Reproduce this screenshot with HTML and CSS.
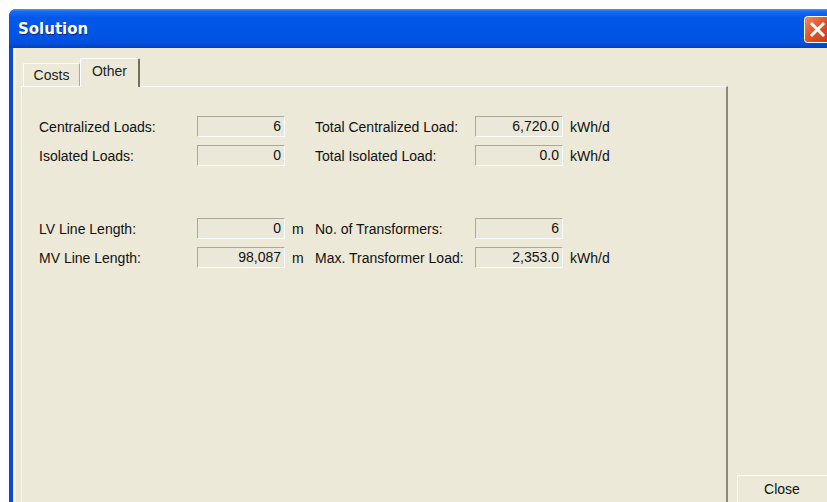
FILE: index.html
```html
<!DOCTYPE html>
<html>
<head>
<meta charset="utf-8">
<title>Solution</title>
<link rel="stylesheet" href="styles.css">
</head>
<body>
<div class="window">
  <div class="titlebar">
    <span class="title">Solution</span>
    <span class="close-x">
      <svg width="27" height="27" viewBox="0 0 27 27">
        <defs>
          <linearGradient id="xg" x1="0" y1="0" x2="1" y2="1">
            <stop offset="0" stop-color="#f08a6a"/>
            <stop offset="0.45" stop-color="#e0562c"/>
            <stop offset="1" stop-color="#c23a12"/>
          </linearGradient>
        </defs>
        <rect x="0.5" y="0.5" width="26" height="26" rx="3" fill="url(#xg)" stroke="#fff"/>
        <path d="M8 8 L19 19 M19 8 L8 19" stroke="#fff" stroke-width="3" stroke-linecap="square"/>
      </svg>
    </span>
  </div>
  <div class="client">
    <div class="tabs-area">
      <div class="tabstrip">
        <div class="tab">Costs</div>
        <div class="tab active">Other</div>
      </div>
      <div class="panel">
        <div class="fields">
          <span class="label">Centralized Loads:</span>
          <span class="box">6</span>
          <span class="unit"></span>
          <span class="label">Total Centralized Load:</span>
          <span class="box">6,720.0</span>
          <span class="unit">kWh/d</span>

          <span class="label">Isolated Loads:</span>
          <span class="box">0</span>
          <span class="unit"></span>
          <span class="label">Total Isolated Load:</span>
          <span class="box">0.0</span>
          <span class="unit">kWh/d</span>
        </div>
        <div class="fields lines">
          <span class="label">LV Line Length:</span>
          <span class="box">0</span>
          <span class="unit">m</span>
          <span class="label">No. of Transformers:</span>
          <span class="box">6</span>
          <span class="unit"></span>

          <span class="label">MV Line Length:</span>
          <span class="box">98,087</span>
          <span class="unit">m</span>
          <span class="label">Max. Transformer Load:</span>
          <span class="box">2,353.0</span>
          <span class="unit">kWh/d</span>
        </div>
      </div>
    </div>
    <div class="side">
      <button class="btn">Close</button>
    </div>
  </div>
</div>
</body>
</html>
```

FILE: styles.css
```css
html, body {
  margin: 0;
  padding: 0;
  background: #ffffff;
  overflow: hidden;
  width: 827px;
  height: 502px;
}

body {
  font-family: "Liberation Sans", Arial, sans-serif;
  font-size: 14px;
  color: #000;
}

.window {
  margin: 9px 0 0 9px;
  width: 830px;
  height: 493px;
  display: flex;
  flex-direction: column;
  border-radius: 7px 7px 0 0;
  overflow: hidden;
  background: #0c4bd8;
}

/* caption bar */
.titlebar {
  height: 39px;
  flex: none;
  display: flex;
  align-items: center;
  justify-content: space-between;
  padding: 0 8px 0 9px;
  background: linear-gradient(#4a95fa 0, #1a6af4 6%, #0258ea 22%, #0055e6 60%, #0150dc 88%, #003fbd 100%);
}

.title {
  font-family: "DejaVu Sans", sans-serif;
  font-weight: bold;
  font-size: 15px;
  color: #fff;
  text-shadow: 1px 1px 0 #0a2a8a;
  margin-top: 1px;
}

.close-x {
  display: flex;
  margin-top: 2px;
}

/* window body */
.client {
  flex: 1;
  min-height: 0;
  display: flex;
  margin-left: 4px;
  background: #ece9d8;
  border-left: 3px solid #f4f2e8;
  padding-left: 5px;
}

.tabs-area {
  width: 707px;
  display: flex;
  flex-direction: column;
  padding-top: 10px;
}

.tabstrip {
  display: flex;
  align-items: flex-end;
  height: 28px;
  padding-left: 2px;
}

.tab {
  height: 23px;
  box-sizing: border-box;
  display: flex;
  align-items: center;
  justify-content: center;
  border-top: 1px solid #fff;
  border-left: 1px solid #fff;
  border-right: 1px solid #aca899;
  border-radius: 2px 2px 0 0;
  background: #ece9d8;
  width: 57px;
  color: #222;
}

.tab.active {
  height: 29px;
  width: 60px;
  margin-bottom: -1px;
  padding-bottom: 4px;
  border-right: 2px solid #716f64;
  position: relative;
  z-index: 1;
}

.panel {
  flex: 1;
  border-top: 1px solid #fff;
  border-left: 1px solid #fff;
  border-right: 2px solid #8c897c;
  padding: 29px 0 0 17px;
}

.fields {
  display: grid;
  grid-template-columns: 158px 88px 30px 160px 88px auto;
  grid-auto-rows: 21px;
  row-gap: 8px;
  align-items: center;
  white-space: nowrap;
}

.fields.lines {
  margin-top: 52px;
}

.label {
  color: #111;
}

.box {
  height: 21px;
  box-sizing: border-box;
  border-top: 1px solid #aca899;
  border-left: 1px solid #aca899;
  border-bottom: 1px solid #fff;
  border-right: 1px solid #fff;
  background: #ebe8d9;
  text-align: right;
  padding-right: 3px;
  line-height: 19px;
  color: #111;
}

.unit {
  padding-left: 7px;
  color: #111;
}

.side {
  flex: 1;
  display: flex;
  align-items: flex-end;
  padding: 0 0 0 9px;
}

.btn {
  width: 96px;
  height: 28px;
  margin-bottom: -1px;
  font-family: "Liberation Sans", Arial, sans-serif;
  font-size: 14px;
  color: #111;
  background: #ece9d8;
  border: 1px solid;
  border-color: #fff #716f64 #716f64 #fff;
  padding: 0 6px 0 0;
}
```
